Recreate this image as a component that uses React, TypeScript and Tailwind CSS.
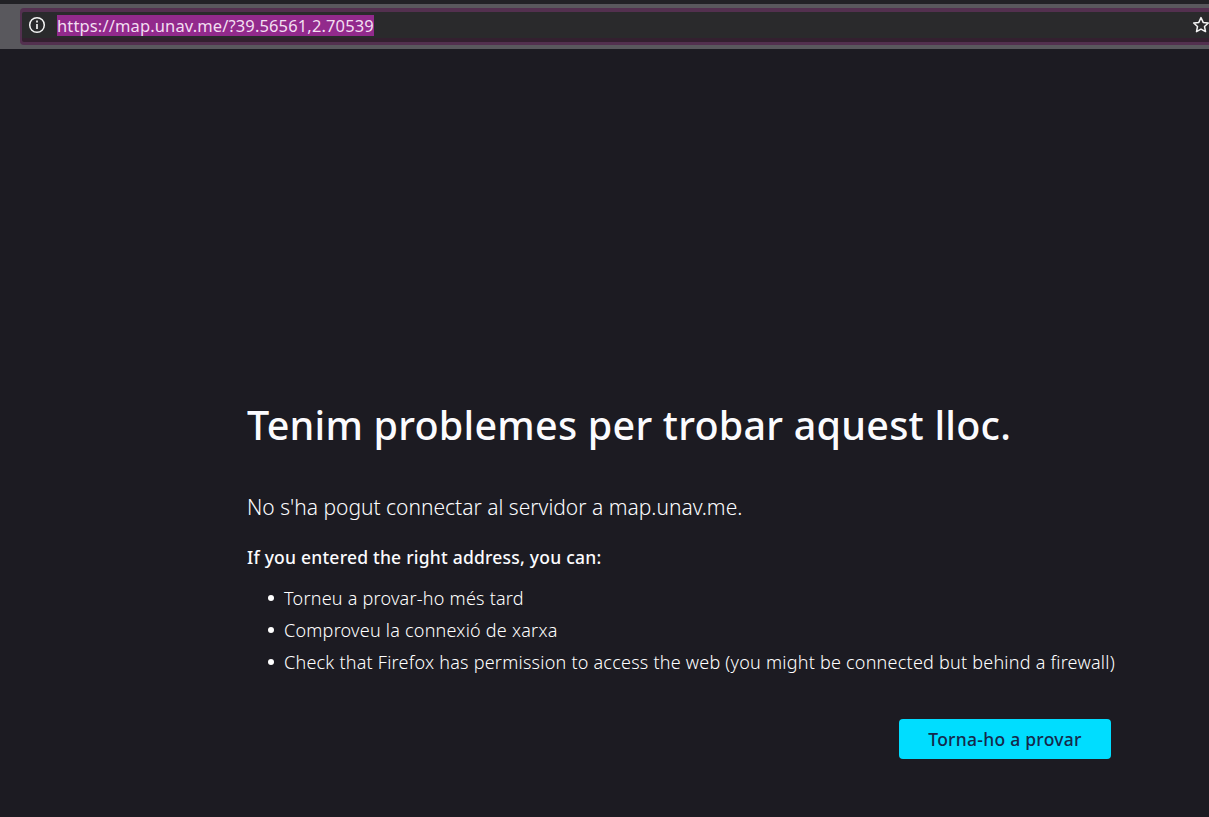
import React from "react";

const font = { fontFamily: '"Noto Sans", sans-serif' };

const items = [
  "Torneu a provar-ho més tard",
  "Comproveu la connexió de xarxa",
  "Check that Firefox has permission to access the web (you might be connected but behind a firewall)",
];

export default function App() {
  return (
    <div className="flex h-[817px] w-[1209px] flex-col overflow-hidden bg-[#1c1b22] text-[#fbfbfe]" style={font}>
      <header className="flex h-[49px] shrink-0 flex-col">
        <div className="h-[4px] bg-[#222226]" />
        <div className="h-[45px] bg-[#59585d] py-[4px] pl-[20px]">
          <div className="h-[37px] rounded-l-[4px] bg-[#53304f] pt-[4px] pb-[3px] pl-[2px]">
            <div className="flex h-[30px] items-center rounded-l-[2px] border-b-[4px] border-[#33202f] bg-[#2a2a2c] pl-[6px]">
              <svg className="h-[18px] w-[18px] shrink-0" viewBox="0 0 18 18" fill="none" stroke="#f4f4f4" strokeWidth="1.5">
                <circle cx="9" cy="9" r="7.3" />
                <path d="M9 8v5" strokeWidth="1.7" />
                <path d="M9 4.6v1.8" strokeWidth="1.7" />
              </svg>
              <span className="ml-[11px] bg-[#922a8c] text-[16.5px] leading-[21px] tracking-[0.135px] whitespace-nowrap text-[#f3dff1]">
                https://map.unav.me/?39.56561,2.70539
              </span>
              <svg className="mr-[-1px] ml-auto h-[18px] w-[18px] shrink-0" viewBox="0 0 18 18" fill="none" stroke="#f4f4f4" strokeWidth="1.5" strokeLinejoin="round">
                <path d="M9 1.6l2.2 4.8 5.1.6-3.8 3.5 1 5.1L9 13.1l-4.5 2.5 1-5.1L1.7 7l5.1-.6z" />
              </svg>
            </div>
          </div>
        </div>
      </header>

      <main className="flex flex-1 flex-col pt-[351px] pl-[247px]">
        <h1 className="text-[39.5px] leading-[50px] font-medium tracking-[0.23px] whitespace-nowrap">
          Tenim problemes per trobar aquest lloc.
        </h1>
        <p className="mt-[43px] text-[21px] leading-[28px] font-light whitespace-nowrap">
          No s&apos;ha pogut connectar al servidor a map.unav.me.
        </p>
        <p className="mt-[25px] text-[17.5px] leading-[22px] font-medium tracking-[0.22px] whitespace-nowrap">
          If you entered the right address, you can:
        </p>
        <ul className="mt-[18px] flex flex-col gap-[8px] pl-[21px] text-[18px] leading-[24px] font-light tracking-[0.23px] whitespace-nowrap text-white">
          {items.map((item) => (
            <li key={item} className="flex items-center">
              <span className="mr-[10px] h-[6px] w-[6px] shrink-0 rounded-full bg-white" />
              {item}
            </li>
          ))}
        </ul>
        <div className="mt-[45px] ml-[652px]">
          <button
            type="button"
            className="h-[40px] w-[212px] rounded-[4px] bg-[#00ddff] text-[17.5px] font-medium tracking-[0.26px] text-[#15294b]"
          >
            Torna-ho a provar
          </button>
        </div>
      </main>
    </div>
  );
}
